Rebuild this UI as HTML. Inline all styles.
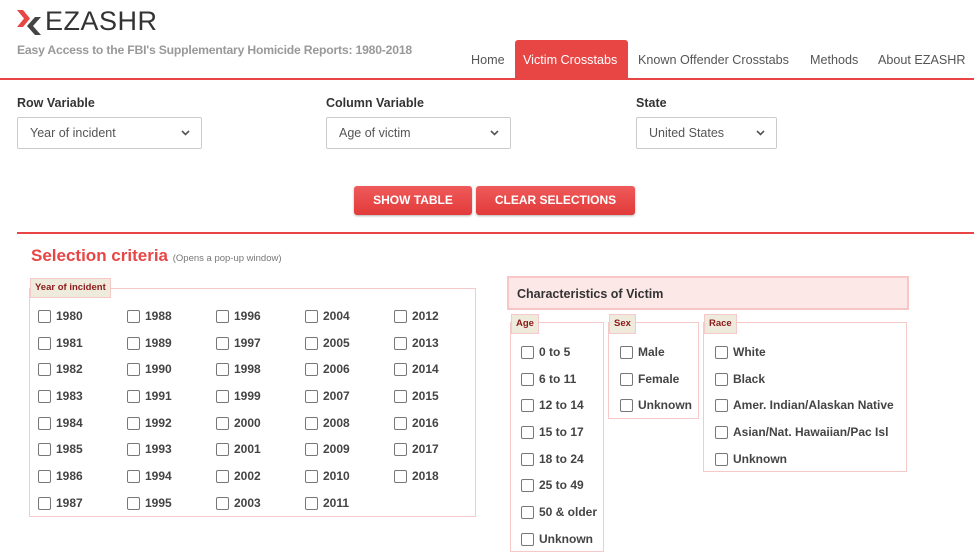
<!DOCTYPE html>
<html><head><meta charset="utf-8"><style>
*{box-sizing:border-box;margin:0;padding:0}
body{width:974px;height:556px;background:#fff;font-family:"Liberation Sans",sans-serif;position:relative;overflow:hidden;color:#333}
.a{position:absolute;white-space:nowrap}
.nav{font-size:12.6px;color:#555;top:53px}
.lbl{font-size:12.5px;font-weight:bold;color:#333;top:96px}
.sel{position:absolute;height:32px;border:1px solid #ccc;border-radius:2px;font-size:12.5px;color:#555;padding:8px 0 0 12px;background:#fff}
.sel svg{position:absolute;right:11px;top:12px}
.btn{position:absolute;top:186px;height:29px;background:linear-gradient(#ef5a5a,#e23a3a);border-radius:3px;color:#fff;font-weight:bold;font-size:12px;text-align:center;line-height:29px;box-shadow:0 1px 2px rgba(0,0,0,.3)}
.fs{position:absolute;border:1px solid #f6c9c9}
.lg{position:absolute;background:#efebdc;border:1px solid #f6c9c9;color:#8b1a1a;font-size:9.5px;font-weight:bold;padding:4px 4px;line-height:10px}
.cb{position:absolute;font-size:12px;font-weight:bold;color:#444;line-height:14px}
.cb:before{content:"";position:absolute;left:-18px;top:1px;width:11px;height:11px;border:1px solid #777;border-radius:2px;background:#fff}
</style></head><body>
<svg class="a" style="left:17px;top:10px" width="25" height="25" viewBox="0 0 25 25"><path d="M0 0h6l7 8.5-7 8.5H0l7-8.5z" fill="#e84545"/><path d="M24 7h-6l-8 9 8 9h6l-8-9z" fill="#444"/></svg>
<div class="a" style="left:45px;top:6px;font-size:27px;color:#333;letter-spacing:.5px">EZASHR</div>
<div class="a" style="left:17px;top:43px;font-size:12.2px;color:#999;font-weight:bold;letter-spacing:-.2px">Easy Access to the FBI's Supplementary Homicide Reports: 1980-2018</div>
<div class="a" style="left:0;top:78px;width:974px;height:2px;background:#e84545"></div>
<div class="a nav" style="left:471px">Home</div>
<div class="a" style="left:515px;top:40px;width:113px;height:39px;background:#e84545;border-radius:3px 3px 0 0"></div>
<div class="a nav" style="left:523px;color:#fff">Victim Crosstabs</div>
<div class="a nav" style="left:638px">Known Offender Crosstabs</div>
<div class="a nav" style="left:810px">Methods</div>
<div class="a nav" style="left:878px">About EZASHR</div>

<div class="a lbl" style="left:17px">Row Variable</div>
<div class="a lbl" style="left:326px">Column Variable</div>
<div class="a lbl" style="left:636px">State</div>
<div class="sel" style="left:17px;top:117px;width:185px">Year of incident<svg width="9" height="6"><path d="M1 1l3.5 3.5L8 1" stroke="#555" stroke-width="1.6" fill="none"/></svg></div>
<div class="sel" style="left:326px;top:117px;width:185px">Age of victim<svg width="9" height="6"><path d="M1 1l3.5 3.5L8 1" stroke="#555" stroke-width="1.6" fill="none"/></svg></div>
<div class="sel" style="left:636px;top:117px;width:141px">United States<svg width="9" height="6"><path d="M1 1l3.5 3.5L8 1" stroke="#555" stroke-width="1.6" fill="none"/></svg></div>
<div class="btn" style="left:354px;width:118px">SHOW TABLE</div>
<div class="btn" style="left:476px;width:159px">CLEAR SELECTIONS</div>
<div class="a" style="left:17px;top:232px;width:957px;height:2px;background:#e84545"></div>
<div class="a" style="left:31px;top:246px;font-size:17px;font-weight:bold;color:#e84545">Selection criteria <span style="font-size:9.5px;color:#777;font-weight:normal">(Opens a pop-up window)</span></div>

<div class="fs" style="left:29px;top:288px;width:447px;height:229px"></div>
<div class="lg" style="left:30px;top:278px">Year of incident</div>

<div class="a" style="left:507px;top:276px;width:402px;height:34px;background:#fde8e8;border:2px solid #f8c6c6;font-size:12.5px;font-weight:bold;color:#333;padding:9px 0 0 8px">Characteristics of Victim</div>
<div class="fs" style="left:510px;top:322px;width:94px;height:230px"></div>
<div class="lg" style="left:511px;top:314px">Age</div>
<div class="fs" style="left:608px;top:322px;width:91px;height:97px"></div>
<div class="lg" style="left:609px;top:314px">Sex</div>
<div class="fs" style="left:703px;top:322px;width:204px;height:150px"></div>
<div class="lg" style="left:704px;top:314px">Race</div>

<div class="cb" style="left:539px;top:345px">0 to 5</div>
<div class="cb" style="left:539px;top:372px">6 to 11</div>
<div class="cb" style="left:539px;top:398px">12 to 14</div>
<div class="cb" style="left:539px;top:425px">15 to 17</div>
<div class="cb" style="left:539px;top:452px">18 to 24</div>
<div class="cb" style="left:539px;top:478px">25 to 49</div>
<div class="cb" style="left:539px;top:505px">50 &amp; older</div>
<div class="cb" style="left:539px;top:532px">Unknown</div>
<div class="cb" style="left:638px;top:345px">Male</div>
<div class="cb" style="left:638px;top:372px">Female</div>
<div class="cb" style="left:638px;top:398px">Unknown</div>
<div class="cb" style="left:733px;top:345px">White</div>
<div class="cb" style="left:733px;top:372px">Black</div>
<div class="cb" style="left:733px;top:398px">Amer. Indian/Alaskan Native</div>
<div class="cb" style="left:733px;top:425px">Asian/Nat. Hawaiian/Pac Isl</div>
<div class="cb" style="left:733px;top:452px">Unknown</div>

<div class="cb" style="left:56px;top:309px">1980</div><div class="cb" style="left:56px;top:336px">1981</div><div class="cb" style="left:56px;top:362px">1982</div><div class="cb" style="left:56px;top:389px">1983</div><div class="cb" style="left:56px;top:416px">1984</div><div class="cb" style="left:56px;top:442px">1985</div><div class="cb" style="left:56px;top:469px">1986</div><div class="cb" style="left:56px;top:496px">1987</div>
<div class="cb" style="left:145px;top:309px">1988</div><div class="cb" style="left:145px;top:336px">1989</div><div class="cb" style="left:145px;top:362px">1990</div><div class="cb" style="left:145px;top:389px">1991</div><div class="cb" style="left:145px;top:416px">1992</div><div class="cb" style="left:145px;top:442px">1993</div><div class="cb" style="left:145px;top:469px">1994</div><div class="cb" style="left:145px;top:496px">1995</div>
<div class="cb" style="left:234px;top:309px">1996</div><div class="cb" style="left:234px;top:336px">1997</div><div class="cb" style="left:234px;top:362px">1998</div><div class="cb" style="left:234px;top:389px">1999</div><div class="cb" style="left:234px;top:416px">2000</div><div class="cb" style="left:234px;top:442px">2001</div><div class="cb" style="left:234px;top:469px">2002</div><div class="cb" style="left:234px;top:496px">2003</div>
<div class="cb" style="left:323px;top:309px">2004</div><div class="cb" style="left:323px;top:336px">2005</div><div class="cb" style="left:323px;top:362px">2006</div><div class="cb" style="left:323px;top:389px">2007</div><div class="cb" style="left:323px;top:416px">2008</div><div class="cb" style="left:323px;top:442px">2009</div><div class="cb" style="left:323px;top:469px">2010</div><div class="cb" style="left:323px;top:496px">2011</div>
<div class="cb" style="left:412px;top:309px">2012</div><div class="cb" style="left:412px;top:336px">2013</div><div class="cb" style="left:412px;top:362px">2014</div><div class="cb" style="left:412px;top:389px">2015</div><div class="cb" style="left:412px;top:416px">2016</div><div class="cb" style="left:412px;top:442px">2017</div><div class="cb" style="left:412px;top:469px">2018</div>
</body></html>
